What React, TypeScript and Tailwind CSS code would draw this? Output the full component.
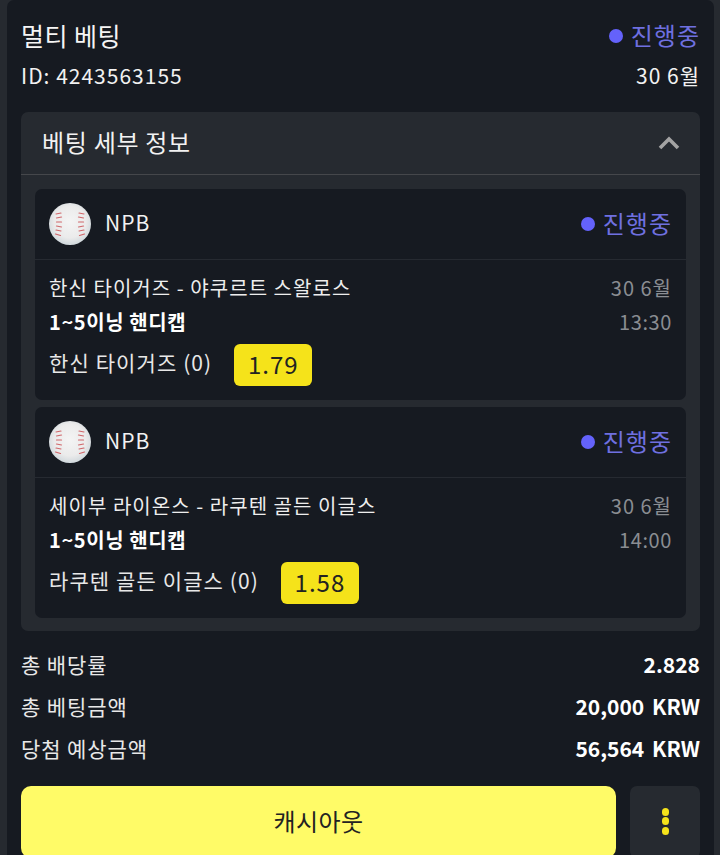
function StatusBadge() {
  return (
    <div className="flex items-center gap-[8px]">
      <span className="h-[14px] w-[14px] rounded-full bg-[#6462fb]" />
      <span className="pb-[2px] text-[24px] leading-[30px] tracking-[1px] text-[#6f70e0]">진행중</span>
    </div>
  );
}

function Baseball() {
  return (
    <svg viewBox="0 0 42 42" className="h-[42px] w-[42px] shrink-0">
      <defs>
        <radialGradient id="ball" cx="50%" cy="45%" r="58%">
          <stop offset="0%" stopColor="#f4f4f4" />
          <stop offset="65%" stopColor="#ebebeb" />
          <stop offset="100%" stopColor="#ccd5da" />
        </radialGradient>
      </defs>
      <circle cx="21" cy="21" r="21" fill="url(#ball)" />
      <g stroke="#d0666a" strokeWidth="1.200" strokeLinecap="round" fill="none">
        <path d="M7 11l5 -1M7.500 15l5 -1M7.500 19l5 0M7.500 23l5 1M7 27l5 1M6.500 31l5 1.500" />
        <path d="M30 10l5 1M29.500 14l5 1M29.500 19l5 0M29.500 24l5 -1M30 28l5 -1M30.500 32.500l5 -1.500" />
      </g>
    </svg>
  );
}

type Bet = {
  match: string;
  time: string;
  pick: string;
  odds: string;
};

const bets: Bet[] = [
  { match: "한신 타이거즈 - 야쿠르트 스왈로스", time: "13:30", pick: "한신 타이거즈 (0)", odds: "1.79" },
  { match: "세이부 라이온스 - 라쿠텐 골든 이글스", time: "14:00", pick: "라쿠텐 골든 이글스 (0)", odds: "1.58" },
];

function BetCard({ bet }: { bet: Bet }) {
  return (
    <div className="rounded-[7px] bg-[#161a21]">
      <div className="flex h-[71px] items-center justify-between border-b border-[#262a31] px-[14px]">
        <div className="flex items-center gap-[14px]">
          <Baseball />
          <span className="pb-[2px] text-[21px] tracking-[1px] text-[#f2f2f2]">NPB</span>
        </div>
        <StatusBadge />
      </div>
      <div className="h-[140px] px-[14px] pt-[11px]">
        <div className="flex items-center justify-between">
          <span className="text-[20px] leading-[34px] tracking-[1.050px] text-[#eeeeee]">{bet.match}</span>
          <span className="text-[20px] leading-[34px] tracking-[1px] text-[#8a8d92]">30 6월</span>
        </div>
        <div className="flex items-center justify-between">
          <span className="pb-[2px] text-[20px] font-bold leading-[34px] tracking-[0.6px] text-white">1~5이닝 핸디캡</span>
          <span className="pb-[2px] text-[20px] leading-[34px] tracking-[0.6px] text-[#8a8d92]">{bet.time}</span>
        </div>
        <div className="mt-[3px] flex items-center gap-[22px]">
          <span className="pb-[4px] text-[21px] tracking-[1.100px] text-[#e8e8e8]">{bet.pick}</span>
          <span className="flex h-[42px] w-[78px] items-center justify-center rounded-[6px] bg-[#f5e31a] pb-[2px] text-[24px] tracking-[1px] text-[#222222]">
            {bet.odds}
          </span>
        </div>
      </div>
    </div>
  );
}

function SummaryRow({ label, value }: { label: string; value: string }) {
  return (
    <div className="flex h-[42px] items-center justify-between">
      <span className="text-[21px] tracking-[0.900px] text-[#e8e8e8]">{label}</span>
      <span className="text-[21px] font-bold text-white [word-spacing:3px]">{value}</span>
    </div>
  );
}

export default function App() {
  return (
    <div
      className="h-[855px] w-[720px] overflow-hidden bg-[#262a30] pl-[7px] pr-[6px]"
      style={{ fontFamily: '"Noto Sans CJK KR", "Noto Sans", sans-serif' }}
    >
      <div className="h-full rounded-t-[7px] bg-[#161a21] px-[14px] pt-[16px]">
        <div className="flex h-[40px] items-center justify-between">
          <span className="text-[25px] tracking-[0.5px] text-[#f5f5f5]">멀티 베팅</span>
          <StatusBadge />
        </div>
        <div className="flex h-[40px] items-center justify-between">
          <span className="text-[21px] tracking-[1px] text-[#f2f2f2]">ID: 4243563155</span>
          <span className="text-[21px] tracking-[1px] text-[#f2f2f2]">30 6월</span>
        </div>

        <div className="mt-[16px] rounded-[7px] bg-[#262a30]">
          <div className="flex h-[63px] items-center justify-between border-b border-[#45474b] pl-[21px] pr-[20px]">
            <span className="pb-[2px] text-[24px] tracking-[0.7px] text-[#f2f2f2]">베팅 세부 정보</span>
            <svg viewBox="0 0 22 14" className="h-[14px] w-[22px]">
              <path d="M2 12 L11 3 L20 12" fill="none" stroke="#a3a3a3" strokeWidth="3.600" />
            </svg>
          </div>
          <div className="flex flex-col gap-[7px] px-[14px] pb-[13px] pt-[14px]">
            {bets.map((bet) => (
              <BetCard key={bet.odds} bet={bet} />
            ))}
          </div>
        </div>

        <div className="mt-[13px]">
          <SummaryRow label="총 배당률" value="2.828" />
          <SummaryRow label="총 베팅금액" value="20,000 KRW" />
          <SummaryRow label="당첨 예상금액" value="56,564 KRW" />
        </div>

        <div className="mt-[16px] flex gap-[14px]">
          <button type="button" className="h-[72px] flex-1 rounded-[10px] bg-[#fffb67] pb-[2px] text-[24px] tracking-[0.4px] text-[#222222]">
            캐시아웃
          </button>
          <button type="button" className="flex h-[72px] w-[70px] flex-col items-center justify-center gap-[1.500px] rounded-[7px] bg-[#262a30] pb-[2px]">
            <span className="h-[8px] w-[7px] rounded-full bg-[#f5e31a]" />
            <span className="h-[8px] w-[7px] rounded-full bg-[#f5e31a]" />
            <span className="h-[8px] w-[7px] rounded-full bg-[#f5e31a]" />
          </button>
        </div>
      </div>
    </div>
  );
}
